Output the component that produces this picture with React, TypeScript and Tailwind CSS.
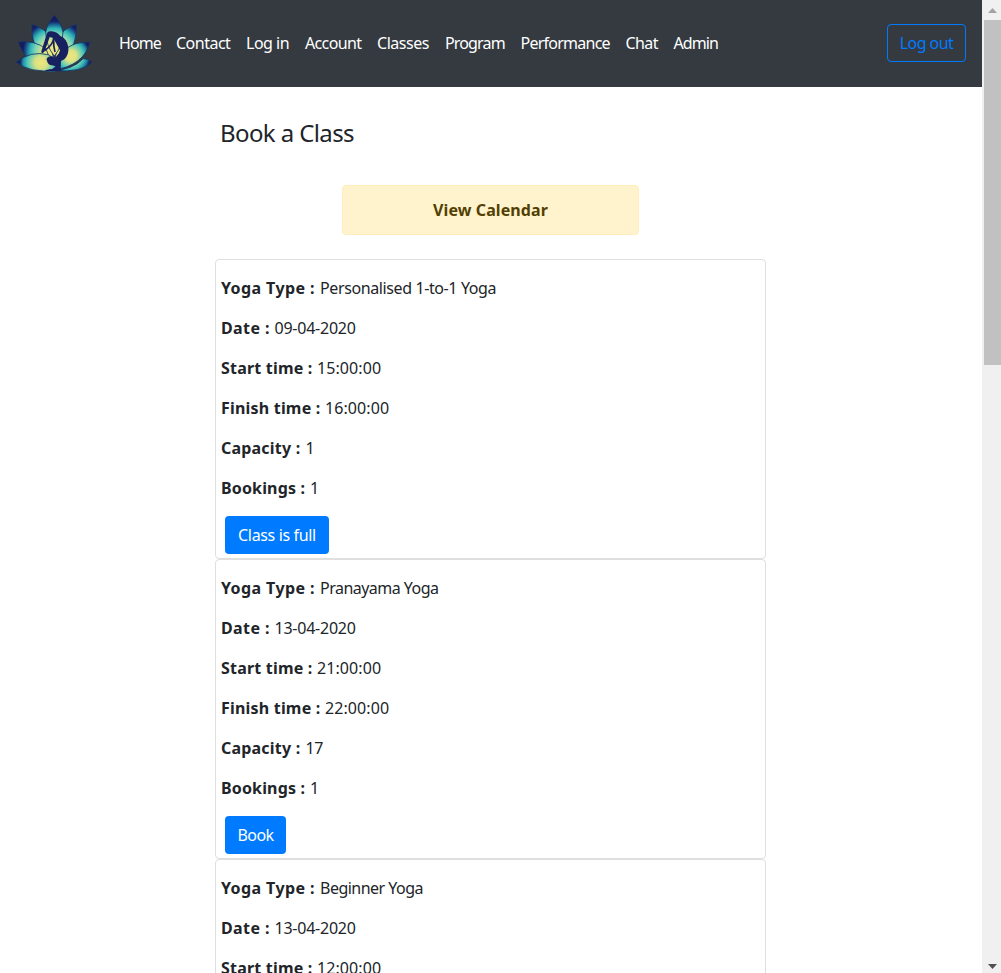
import type { ReactNode } from "react";

const links: [string, string][] = [
  ["Home", "w-[57px] tracking-[-0.9px]"],
  ["Contact", "w-[70px] tracking-[-0.5px]"],
  ["Log in", "w-[59px] tracking-[-0.5px]"],
  ["Account", "w-[72px] tracking-[-0.65px]"],
  ["Classes", "w-[68px] tracking-[-0.45px]"],
  ["Program", "w-[75.5px] tracking-[-0.85px]"],
  ["Performance", "w-[105px] tracking-[-0.75px]"],
  ["Chat", "w-[48px] tracking-[-0.6px]"],
  ["Admin", "w-[60px] tracking-[-0.9px]"],
];

const classes = [
  { type: "Personalised 1-to-1 Yoga", date: "09-04-2020", start: "15:00:00", finish: "16:00:00", capacity: "1", bookings: "1", full: true },
  { type: "Pranayama Yoga", date: "13-04-2020", start: "21:00:00", finish: "22:00:00", capacity: "17", bookings: "1", full: false },
  { type: "Beginner Yoga", date: "13-04-2020", start: "12:00:00", finish: "13:00:00", capacity: "15", bookings: "1", full: false },
];

function Logo() {
  return (
    <svg className="h-[58px] w-[78px] shrink-0" viewBox="3 4 234 174" aria-label="Yoga lotus">
      <defs>
        <radialGradient id="outer" gradientUnits="userSpaceOnUse" cx="121" cy="120" r="112">
          <stop offset="0" stopColor="#f1e77d" />
          <stop offset=".32" stopColor="#e0e484" />
          <stop offset=".52" stopColor="#7bd5b8" />
          <stop offset=".66" stopColor="#2ab0b5" />
          <stop offset=".76" stopColor="#1c5c8e" />
          <stop offset=".84" stopColor="#151e63" />
          <stop offset="1" stopColor="#141957" />
        </radialGradient>
        <radialGradient id="left" gradientUnits="userSpaceOnUse" cx="81" cy="150" r="74">
          <stop offset="0" stopColor="#f0e67a" />
          <stop offset=".25" stopColor="#d7e184" />
          <stop offset=".55" stopColor="#50c8bb" />
          <stop offset=".72" stopColor="#2193a8" />
          <stop offset=".85" stopColor="#151e63" />
        </radialGradient>
        <radialGradient id="right" gradientUnits="userSpaceOnUse" cx="171" cy="130" r="68">
          <stop offset="0" stopColor="#f0e67a" />
          <stop offset=".24" stopColor="#dde384" />
          <stop offset=".54" stopColor="#50c8bb" />
          <stop offset=".7" stopColor="#2193a8" />
          <stop offset=".86" stopColor="#151e63" />
        </radialGradient>
      </defs>
      <g stroke="#163568" strokeWidth="2.5" strokeLinejoin="round">
        <path fill="url(#outer)" d="M54 36Q82 42 100 62L121 145Q76 125 62 94Q52 69 54 36Z" />
        <path fill="url(#outer)" d="M187 36Q160 42 142 62L121 145Q166 125 179 94Q189 69 187 36Z" />
        <path fill="url(#outer)" d="M121 8Q101 29 95 58Q97 102 121 130Q145 102 147 58Q141 29 121 8Z" />
        <path fill="url(#outer)" d="M13 88Q64 82 96 109L121 170Q34 157 13 88Z" />
        <path fill="url(#right)" d="M228 89Q176 85 151 115L120 172Q209 159 228 89Z" />
        <path fill="url(#right)" d="M234 148Q221 137 207 138Q178 171 113 174Q207 181 234 148Z" />
        <path fill="url(#left)" d="M7 148Q51 113 103 126Q137 144 138 174Q42 182 7 148Z" />
      </g>
      <path fill="#17215f" d="M99 62Q101 54 113 56Q128 57 139 70Q158 77 163 103Q165 127 151 140L141 145L140 169Q145 175 136 175H92Q96 170 115 169L125 161L114 158Q101 156 99 144Q95 137 104 132Q112 129 122 135Q134 128 138 113L124 87L118 76L107 73L99 96L90 119Q81 125 82 116Z" />
      <path fill="none" stroke="#17215f" strokeWidth="5" d="M119 76Q117 98 91 114M119 79Q118 100 123 118" />
    </svg>
  );
}

function Field({ label, labelStyle, valueStyle, children }: { label: string; labelStyle: string; valueStyle: string; children: ReactNode }) {
  return (
    <p className="mb-4 flex h-6 whitespace-nowrap leading-6">
      <b className={`${labelStyle} shrink-0 font-bold`}>{label} :</b>
      <span className={valueStyle}>{children}</span>
    </p>
  );
}

export default function App() {
  return (
    <div className="flex h-[973px] w-[1001px] overflow-hidden bg-white font-['Noto_Sans',sans-serif] text-base text-[#212529]">
      <div className="min-w-0 flex-1">
        <nav className="flex h-[87px] items-center bg-[#343a40] pb-0.5 pl-[15px] pr-4 text-white">
          <Logo />
          <div className="ml-[26px] flex flex-1 whitespace-nowrap">
            {links.map(([name, style]) => (
              <a key={name} href="#" className={style}>{name}</a>
            ))}
          </div>
          <button className="h-[38px] w-[79px] whitespace-nowrap rounded border border-[#007bff] tracking-[-0.55px] text-[#007bff]">Log out</button>
        </nav>
        <main className="ml-[215px] w-[551px]">
          <h1 className="pl-[5px] pt-[29px] text-2xl leading-[34px] tracking-[-0.6px]">Book a Class</h1>
          <a href="#" className="mx-auto mt-[35px] flex h-[50px] w-[297px] items-center justify-center rounded border border-[#ffeeba] bg-[#fff3cd] font-bold tracking-[0.1px] text-[#533f03]">View Calendar</a>
          <div className="mt-6">
            {classes.map((item, i) => (
              <section key={i} className="h-[300px] rounded border border-[#dfdfdf] px-[5px] pt-4">
                <Field label="Yoga Type" labelStyle="w-[99px] tracking-[0.4px]" valueStyle={i === 0 ? "tracking-[-0.39px]" : "tracking-[-0.52px]"}>{item.type}</Field>
                <Field label="Date" labelStyle="w-[53.5px] tracking-[0.4px]" valueStyle="tracking-[-0.24px]">{item.date}</Field>
                <Field label="Start time" labelStyle="w-[96px] tracking-[0.2px]" valueStyle="tracking-[0.08px]">{item.start}</Field>
                <Field label="Finish time" labelStyle="w-[104px] tracking-[0.2px]" valueStyle="tracking-[0.08px]">{item.finish}</Field>
                <Field label="Capacity" labelStyle="w-[84.5px] tracking-[0.2px]" valueStyle="tracking-[-0.3px]">{item.capacity}</Field>
                <Field label="Bookings" labelStyle="w-[89px] tracking-[0.15px]" valueStyle="tracking-[-0.3px]">{item.bookings}</Field>
                <button className={`${item.full ? "w-[104px] tracking-[-0.35px]" : "w-[61px] tracking-[-0.6px]"} ml-1 h-[38px] whitespace-nowrap rounded bg-[#007bff] text-white`}>
                  {item.full ? "Class is full" : "Book"}
                </button>
              </section>
            ))}
          </div>
        </main>
      </div>
      <aside className="flex w-[19px] flex-col items-end bg-[#f0f0f0]">
        <svg className="h-5 w-[17px] shrink-0" viewBox="0 0 17 20"><path fill="#a3a3a3" d="M4 13L8.5 8L13 13Z" /></svg>
        <div className="h-[345px] w-[17px] bg-[#c1c1c1]" />
        <svg className="mt-auto h-5 w-[17px] shrink-0" viewBox="0 0 17 20"><path fill="#505050" d="M4 11L8.5 16L13 11Z" /></svg>
      </aside>
    </div>
  );
}
